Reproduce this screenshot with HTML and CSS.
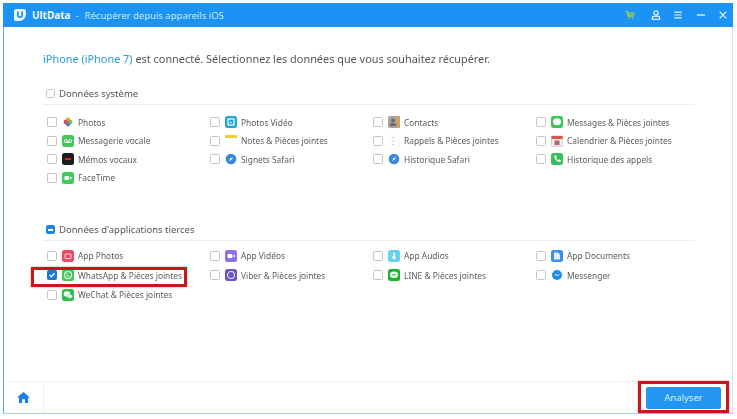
FILE: index.html
```html
<!DOCTYPE html>
<html lang="fr">
<head>
<meta charset="utf-8">
<title>UltData</title>
<link rel="stylesheet" href="styles.css">
</head>
<body>
<div class="window">
  <header class="titlebar">
    <svg class="logo" viewBox="0 0 14 14"><path d="M3 0h8a3 3 0 0 1 3 3v3a8 8 0 0 1-8 8H3a3 3 0 0 1-3-3V3a3 3 0 0 1 3-3z" fill="#eaf4ff"/><path d="M4.500 3v4a2.500 2.500 0 0 0 5 0V3" fill="none" stroke="#1a93f5" stroke-width="2"/></svg>
    <span class="brand">UltData</span>
    <span class="sep">-</span>
    <span class="subtitle">Récupérer depuis appareils iOS</span>
    <div class="controls">
      <svg class="ctl ctl-cart" viewBox="0 0 12 12"><path d="M0.500 1.500h2l1.500 6h6M3 3.500h8l-1 2.500H3.500" fill="none" stroke="#b9cf3a" stroke-width="1.300"/><circle cx="4.500" cy="10" r="1" fill="#b9cf3a"/><circle cx="9" cy="10" r="1" fill="#b9cf3a"/></svg>
      <svg class="ctl" viewBox="0 0 12 12"><circle cx="6" cy="3.500" r="2.600" fill="none" stroke="#fff" stroke-width="1.300"/><path d="M1.500 11V9.500a2 2 0 0 1 2-2h5a2 2 0 0 1 2 2V11z" fill="none" stroke="#fff" stroke-width="1.300"/></svg>
      <svg class="ctl" viewBox="0 0 12 12"><path d="M1.500 2.500h9M1.500 6h9M1.500 9.500h9" stroke="#dff0ff" stroke-width="1.400"/></svg>
      <svg class="ctl" viewBox="0 0 12 12"><path d="M1 6h10" stroke="#fff" stroke-width="1.400"/></svg>
      <svg class="ctl" viewBox="0 0 12 12"><path d="M2 2l8 8M10 2l-8 8" stroke="#e6f3ff" stroke-width="1.500"/></svg>
    </div>
  </header>

  <main class="content">
    <p class="intro"><span class="device">iPhone (iPhone 7)</span> est connecté. Sélectionnez les données que vous souhaitez récupérer.</p>

    <section class="group group-system">
      <h2 class="group-title"><span class="box"></span>Données système</h2>
      <ul class="items">
        <li class="item"><span class="box"></span><svg class="ico" viewBox="0 0 12 12"><circle cx="6" cy="3.800" r="2.300" fill="#f0a030"/><circle cx="8.200" cy="6" r="2.300" fill="#7fbf4a"/><circle cx="6" cy="8.200" r="2.300" fill="#5f7fd0"/><circle cx="3.800" cy="6" r="2.300" fill="#d8505f"/></svg>Photos</li>
        <li class="item"><span class="box"></span><svg class="ico" viewBox="0 0 12 12"><rect width="12" height="12" rx="2.500" fill="#1fa6d8"/><rect x="3" y="3" width="6" height="6" fill="none" stroke="#fff" stroke-width="1.200"/><path d="M5 5.500l2 1-2 1z" fill="#fff"/></svg>Photos Vidéo</li>
        <li class="item"><span class="box"></span><svg class="ico" viewBox="0 0 12 12"><rect width="12" height="12" rx="2" fill="#a9a39b"/><rect x="9" width="3" height="12" fill="#d9a05c"/><circle cx="5" cy="4.500" r="2" fill="#6f6a64"/><path d="M1.500 10a3.500 3 0 0 1 7 0z" fill="#6f6a64"/></svg>Contacts</li>
        <li class="item"><span class="box"></span><svg class="ico" viewBox="0 0 12 12"><rect width="12" height="12" rx="2.500" fill="#3cc45a"/><ellipse cx="6" cy="5.800" rx="4" ry="3.500" fill="#fff"/></svg>Messages &amp; Pièces jointes</li>

        <li class="item"><span class="box"></span><svg class="ico" viewBox="0 0 12 12"><rect width="12" height="12" rx="2.500" fill="#45c65a"/><circle cx="3.800" cy="6" r="1.500" fill="none" stroke="#fff"/><circle cx="8.200" cy="6" r="1.500" fill="none" stroke="#fff"/><path d="M3.800 7.500h4.400" stroke="#fff"/></svg>Messagerie vocale</li>
        <li class="item"><span class="box"></span><svg class="ico" viewBox="0 0 12 12"><rect y="0" width="12" height="3" rx="1" fill="#f1c93c"/><rect y="3" width="12" height="9" fill="#fdfdfd"/></svg>Notes &amp; Pièces jointes</li>
        <li class="item"><span class="box"></span><svg class="ico" viewBox="0 0 12 12"><rect width="12" height="12" fill="#fbfbfb"/><path d="M5 2v1M5 5.500v1M5 9v1" stroke="#b5b5b5" stroke-width="1.200"/></svg>Rappels &amp; Pièces jointes</li>
        <li class="item"><span class="box"></span><svg class="ico" viewBox="0 0 12 12"><rect x="0.500" y="1" width="11" height="10.500" rx="1" fill="#f3eeee" stroke="#bbb" stroke-width=".6"/><rect x="0.500" y="1" width="11" height="3" fill="#d8564f"/><rect x="3.500" y="5.500" width="5" height="4.500" fill="#a86a66"/></svg>Calendrier &amp; Pièces jointes</li>

        <li class="item"><span class="box"></span><svg class="ico" viewBox="0 0 12 12"><rect width="12" height="12" rx="2.500" fill="#1c1c1e"/><path d="M3 6h6" stroke="#c8283a" stroke-width="2"/></svg>Mémos vocaux</li>
        <li class="item"><span class="box"></span><svg class="ico" viewBox="0 0 12 12"><circle cx="6" cy="6" r="5.300" fill="#3b87dc"/><path d="M8 4L6.800 6.800 4 8l1.200-2.800z" fill="#d8ebff"/></svg>Signets Safari</li>
        <li class="item"><span class="box"></span><svg class="ico" viewBox="0 0 12 12"><circle cx="6" cy="6" r="5.300" fill="#3b87dc"/><path d="M8 4L6.800 6.800 4 8l1.200-2.800z" fill="#d8ebff"/></svg>Historique Safari</li>
        <li class="item"><span class="box"></span><svg class="ico" viewBox="0 0 12 12"><rect width="12" height="12" rx="2.500" fill="#35c258"/><path d="M3.500 2.500l1.500-.3 1 2-1 1a5 5 0 0 0 2 2l1-1 2 1-.3 1.500c-3.500 1-7-3-6.200-6.200z" fill="#fff"/></svg>Historique des appels</li>

        <li class="item"><span class="box"></span><svg class="ico" viewBox="0 0 12 12"><rect width="12" height="12" rx="2.500" fill="#43c85c"/><rect x="2.500" y="4" width="4.500" height="4" rx="1" fill="#fff"/><path d="M7.500 6l2-1.500v3z" fill="#fff"/></svg>FaceTime</li>
      </ul>
    </section>

    <section class="group group-apps">
      <h2 class="group-title"><span class="box box-mixed"></span>Données d'applications tierces</h2>
      <ul class="items items-apps">
        <li class="item"><span class="box"></span><svg class="ico" viewBox="0 0 12 12"><rect width="12" height="12" rx="2.500" fill="#ec4a62"/><rect x="3" y="4" width="6" height="4.500" rx=".7" fill="none" stroke="#ffd5db"/></svg>App Photos</li>
        <li class="item"><span class="box"></span><svg class="ico" viewBox="0 0 12 12"><rect width="12" height="12" rx="2.500" fill="#8e6fe8"/><rect x="2.500" y="4" width="5" height="4" rx="1" fill="#fff"/><path d="M8 6l2-1.500v3z" fill="#fff"/></svg>App Vidéos</li>
        <li class="item"><span class="box"></span><svg class="ico" viewBox="0 0 12 12"><rect width="12" height="12" rx="2.500" fill="#66d3ee"/><path d="M6 2.500v4" stroke="#fff" stroke-width="1.500"/><circle cx="6" cy="7.500" r="1.700" fill="#fff"/></svg>App Audios</li>
        <li class="item"><span class="box"></span><svg class="ico" viewBox="0 0 12 12"><rect width="12" height="12" rx="2.500" fill="#3d8fe6"/><path d="M3 2.500h4l2 2v5H3z" fill="#e5f1ff"/></svg>App Documents</li>

        <li class="item"><span class="box box-checked"><svg viewBox="0 0 9 9"><path d="M1.800 4.500l2 2 3.500-4" fill="none" stroke="#fff" stroke-width="1.500"/></svg></span><svg class="ico" viewBox="0 0 12 12"><rect width="12" height="12" rx="2.500" fill="#43c85c"/><circle cx="6" cy="6" r="3.600" fill="none" stroke="#fff" stroke-width="1.100"/><path d="M4.600 4.600c0 1.600 1.200 2.800 2.800 2.800" fill="none" stroke="#fff"/></svg>WhatsApp &amp; Pièces jointes</li>
        <li class="item"><span class="box"></span><svg class="ico" viewBox="0 0 12 12"><rect width="12" height="12" rx="2.500" fill="#6a56c8"/><circle cx="6" cy="6" r="3.500" fill="none" stroke="#e5e0ff" stroke-width="1.100"/></svg>Viber &amp; Pièces jointes</li>
        <li class="item"><span class="box"></span><svg class="ico" viewBox="0 0 12 12"><rect width="12" height="12" rx="2.500" fill="#18b52f"/><ellipse cx="6" cy="5.800" rx="4" ry="3.200" fill="#fff"/><path d="M3.800 5.800h4.400" stroke="#18b52f"/></svg>LINE &amp; Pièces jointes</li>
        <li class="item"><span class="box"></span><svg class="ico" viewBox="0 0 12 12"><circle cx="6" cy="6" r="5" fill="#1d8fe8"/><path d="M3 7l2-2 1.500 1L9 5 7 7 5.500 6z" fill="#fff"/></svg>Messenger</li>

        <li class="item"><span class="box"></span><svg class="ico" viewBox="0 0 12 12"><rect width="12" height="12" rx="2.500" fill="#2fc24a"/><ellipse cx="5" cy="5" rx="3.300" ry="2.700" fill="#fff"/><ellipse cx="7.800" cy="7.300" rx="2.600" ry="2.100" fill="#fff" stroke="#2fc24a" stroke-width=".5"/></svg>WeChat &amp; Pièces jointes</li>
      </ul>
      <div class="mark mark-whatsapp"></div>
    </section>
  </main>

  <footer class="footer">
    <div class="home">
      <svg viewBox="0 0 14 12"><path d="M7 0L0 6h2v6h3.500V8h3v4H12V6h2z" fill="#1a7fe8"/></svg>
    </div>
    <button class="analyze" type="button">Analyser</button>
    <div class="mark mark-analyze"></div>
  </footer>
</div>
</body>
</html>
```

FILE: styles.css
```css
* { box-sizing: border-box; }
html, body { margin: 0; padding: 0; background: #fff; }
body {
  width: 737px;
  height: 419px;
  overflow: hidden;
  font-family: "Noto Sans", "Open Sans", sans-serif;
  color: #555;
}
.window {
  position: relative;
  margin: 3px 4px 0 3px;
  height: 411px;
  display: flex;
  flex-direction: column;
  border-left: 1px solid #5aaeea;
  border-right: 1px solid #cfe6f8;
  border-bottom: 1px solid #a9d3f2;
  filter: blur(0.4px);
}
.titlebar {
  height: 24px;
  flex: none;
  margin: 0 -1px;
  padding: 0 5px 0 11px;
  background: #1a93f5;
  display: flex;
  align-items: center;
  color: #fff;
}
.logo { width: 12px; height: 12px; margin-right: 6px; }
.brand { font-size: 10px; font-weight: 700; color: #eef7ff; }
.sep { font-size: 9.500px; margin: 0 6px 0 5px; color: #bfe0fb; }
.subtitle { font-size: 9.500px; color: #cbe6fc; }
.controls { margin-left: auto; display: flex; gap: 12.500px; align-items: center; }
.ctl { width: 10px; height: 10px; display: block; }
.ctl-cart { margin-right: 3px; }

.content { flex: 1; padding: 0 37px 0 39px; min-height: 0; position: relative; }
.intro { margin: 24px 0 0; font-size: 10.900px; line-height: 16px; color: #555; }
.device { color: #2b9ad8; }

.group-system { margin-top: 20px; }
.group-apps { margin-top: 36px; position: relative; }
.group-title {
  margin: 0;
  height: 18px;
  display: flex;
  align-items: center;
  font-size: 9.500px;
  font-weight: 400;
  color: #555;
  border-bottom: 1px solid #eee;
  padding: 0 0 4px 3px;
}
.group-title .box { margin-right: 4px; width: 9px; height: 9px; }

.box {
  flex: none;
  width: 10px;
  height: 10px;
  border: 1px solid #c4c4c4;
  border-radius: 1.500px;
  background: #fff;
  display: block;
}
.box-mixed { background: #1a86e6; border-color: #1a86e6; position: relative; }
.box-mixed::after {
  content: "";
  position: absolute;
  left: 1px; right: 1px; top: 2.500px;
  height: 2px;
  background: #fff;
}
.box-checked { background: #1a78d8; border-color: #1a78d8; }
.box-checked svg { display: block; width: 100%; height: 100%; }

.items {
  list-style: none;
  margin: 8px 0 0;
  padding: 0 0 0 4px;
  display: grid;
  grid-template-columns: repeat(4, 163px);
  grid-auto-rows: 18.500px;
}
.items-apps { margin-top: 5px; grid-auto-rows: 19.500px; }
.item {
  display: flex;
  align-items: center;
  font-size: 8.400px;
  color: #5c5c5c;
  white-space: nowrap;
}
.item .box { margin-right: 5px; }
.ico { flex: none; width: 12px; height: 12px; margin-right: 4px; display: block; }

.mark {
  position: absolute;
  border: 3px solid #c9161d;
  box-shadow: 0 0 2px rgba(120, 20, 20, .45);
  pointer-events: none;
}
.mark-whatsapp { left: -12px; top: 43.500px; width: 156px; height: 20px; }

.footer {
  position: relative;
  flex: none;
  height: 32px;
  border-top: 1px solid #f1f1f1;
  display: flex;
  align-items: center;
  justify-content: space-between;
  padding-right: 11px;
}
.home {
  width: 40px;
  height: 100%;
  border-right: 1px solid #f1f1f1;
  display: flex;
  align-items: center;
  justify-content: center;
}
.home svg { width: 13px; height: 11px; display: block; }
.analyze {
  width: 75px;
  height: 22px;
  border: 0;
  border-radius: 2px;
  background: #2396f3;
  color: #d6ecff;
  font: 400 9.500px "Noto Sans", sans-serif;
  padding: 0;
}
.mark-analyze { right: 3px; top: -1px; width: 91px; height: 32px; }
```
